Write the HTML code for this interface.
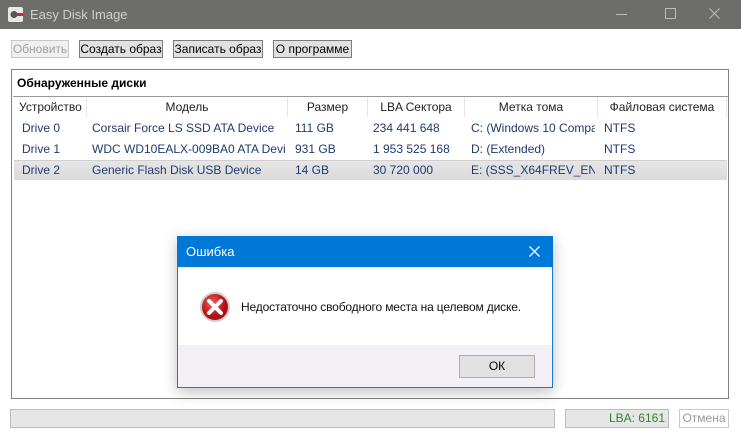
<!DOCTYPE html><html><head><meta charset="utf-8"><style>
*{margin:0;padding:0;box-sizing:border-box}
body{width:741px;height:439px;background:#fff;font-family:"Liberation Sans","Noto Sans CJK SC",sans-serif;font-size:12px;position:relative;overflow:hidden;color:#000}
.a{position:absolute}
.btn{position:absolute;top:40px;height:18px;background:#e1e1e1;border:1px solid #7a7a7a;font-size:12px;line-height:16px;text-align:center;white-space:nowrap}
.h{position:absolute;top:97px;height:20px;line-height:20px;border-right:1px solid #e5e5e5;text-align:center;color:#222}
.c{position:absolute;color:#1e3a70;white-space:nowrap;overflow:hidden;line-height:20px}
</style></head><body>
<div class="a" style="left:0;top:0;width:741px;height:29px;background:#6d6d69"></div>
<svg class="a" style="left:8px;top:7px" width="15" height="15"><rect x="0" y="0" width="15" height="15" rx="2" fill="#e8e8e8"/><circle cx="6" cy="7.5" r="3.5" fill="#555"/><rect x="9" y="6" width="6" height="3" fill="#d22"/></svg>
<div class="a" style="left:30px;top:7px;color:#cfcfcf;font-size:13px">Easy Disk Image</div>
<div class="a" style="left:616px;top:14px;width:11px;height:1px;background:#bbb"></div>
<div class="a" style="left:665px;top:8px;width:11px;height:11px;border:1px solid #bbb"></div>
<svg class="a" style="left:709px;top:8px" width="11" height="11"><path d="M0.5 0.5L10.5 10.5M10.5 0.5L0.5 10.5" stroke="#bbb" stroke-width="1"/></svg>
<div class="btn" style="left:11px;width:58px;color:#a0a0a0;border-color:#c8c8c8;background:#f0f0f0">Обновить</div>
<div class="btn" style="left:79px;width:84px">Создать образ</div>
<div class="btn" style="left:173px;width:90px">Записать образ</div>
<div class="btn" style="left:273px;width:79px">О программе</div>
<div class="a" style="left:11px;top:69px;width:718px;height:330px;border:1px solid #828282"></div>
<div class="a" style="left:17px;top:76px;font-weight:bold;font-size:12px">Обнаруженные диски</div>
<div class="a" style="left:13px;top:96px;width:715px;height:302px;border-top:1px solid #999"></div>
<div class="h" style="left:13px;width:74px;text-align:left;padding-left:6px">Устройство</div>
<div class="h" style="left:87px;width:201px">Модель</div>
<div class="h" style="left:288px;width:80px">Размер</div>
<div class="h" style="left:368px;width:97px">LBA Сектора</div>
<div class="h" style="left:465px;width:133px">Метка тома</div>
<div class="h" style="left:598px;width:129px">Файловая система</div>
<div class="a" style="left:14px;top:160px;width:713px;height:20px;background:linear-gradient(#e6e6e6,#dadada);border-top:1px solid #cfcfcf"></div>
<div class="c" style="left:22px;top:118px">Drive 0</div><div class="c" style="left:92px;top:118px;width:193px">Corsair Force LS SSD ATA Device</div><div class="c" style="left:295px;top:118px">111 GB</div><div class="c" style="left:373px;top:118px">234 441 648</div><div class="c" style="left:471px;top:118px;width:124px">C: (Windows 10 Compact)</div><div class="c" style="left:604px;top:118px">NTFS</div>
<div class="c" style="left:22px;top:139px">Drive 1</div><div class="c" style="left:92px;top:139px;width:193px">WDC WD10EALX-009BA0 ATA Device</div><div class="c" style="left:295px;top:139px">931 GB</div><div class="c" style="left:373px;top:139px">1 953 525 168</div><div class="c" style="left:471px;top:139px;width:124px">D: (Extended)</div><div class="c" style="left:604px;top:139px">NTFS</div>
<div class="c" style="left:22px;top:160px">Drive 2</div><div class="c" style="left:92px;top:160px;width:193px">Generic Flash Disk USB Device</div><div class="c" style="left:295px;top:160px">14 GB</div><div class="c" style="left:373px;top:160px">30 720 000</div><div class="c" style="left:471px;top:160px;width:124px">E: (SSS_X64FREV_EN-US)</div><div class="c" style="left:604px;top:160px">NTFS</div>
<div class="a" style="left:10px;top:409px;width:545px;height:19px;background:#e6e6e6;border:1px solid #bcbcbc"></div>
<div class="a" style="left:565px;top:409px;width:104px;height:19px;background:#e6e6e6;border:1px solid #bcbcbc;color:#2a8a2a;text-align:right;padding-right:3px;line-height:17px">LBA: 6161</div>
<div class="a" style="left:679px;top:409px;width:50px;height:19px;border:1px solid #c8c8c8;color:#999;text-align:center;line-height:17px">Отмена</div>
<div class="a" style="left:177px;top:236px;width:376px;height:152px;border:1px solid #1979ca;background:#f2f0f4;box-shadow:0 4px 14px rgba(0,0,0,.25)"></div>
<div class="a" style="left:177px;top:236px;width:376px;height:31px;background:#0078d7"></div>
<div class="a" style="left:186px;top:244px;color:#fff;font-size:13px">Ошибка</div>
<svg class="a" style="left:529px;top:246px" width="11" height="11"><path d="M0.5 0.5L10.5 10.5M10.5 0.5L0.5 10.5" stroke="#fff" stroke-width="1.3"/></svg>
<div class="a" style="left:178px;top:267px;width:374px;height:78px;background:#fff"></div>
<svg class="a" style="left:199px;top:291px" width="32" height="32"><defs><radialGradient id="g" cx="40%" cy="35%"><stop offset="0" stop-color="#f06060"/><stop offset="1" stop-color="#b01010"/></radialGradient></defs><circle cx="16" cy="16" r="15" fill="#ccc"/><circle cx="16" cy="16" r="13" fill="url(#g)"/><path d="M10 10L22 22M22 10L10 22" stroke="#fff" stroke-width="4" stroke-linecap="round"/></svg>
<div class="a" style="left:241px;top:300px;font-size:12px;color:#111;letter-spacing:-0.15px">Недостаточно свободного места на целевом диске.</div>
<div class="a" style="left:459px;top:355px;width:76px;height:23px;background:#e1e1e1;border:1px solid #adadad;text-align:center;line-height:21px">ОК</div>
</body></html>
